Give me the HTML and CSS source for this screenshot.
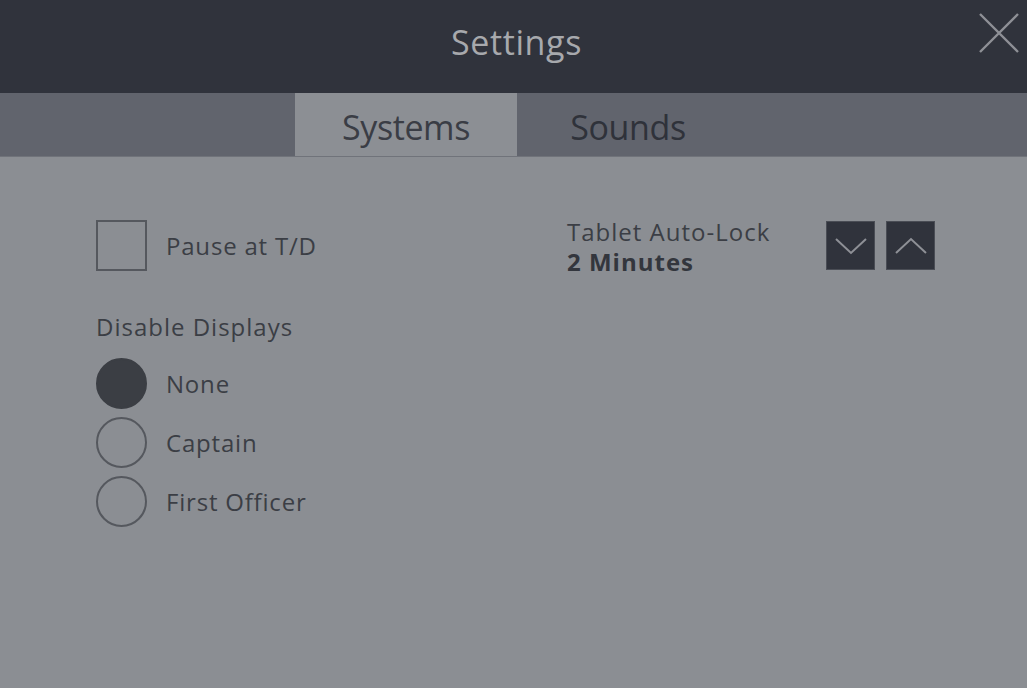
FILE: index.html
```html
<!DOCTYPE html>
<html>
<head>
<meta charset="utf-8">
<link rel="stylesheet" href="styles.css">
</head>
<body>
<div class="app">
  <header class="header">
    <div class="title">Settings</div>
    <button class="close" aria-label="Close">
      <svg width="42" height="42" viewBox="0 0 42 42"><path d="M2 2 L40 40 M40 2 L2 40" stroke="#8e9096" stroke-width="2.4" fill="none"/></svg>
    </button>
  </header>
  <nav class="tabs">
    <div class="tab active">Systems</div>
    <div class="tab">Sounds</div>
  </nav>
  <main class="content">
    <section class="col-left">
      <div class="check-row">
        <span class="checkbox"></span>
        <span class="label">Pause at T/D</span>
      </div>
      <div class="group-title">Disable Displays</div>
      <div class="radios">
        <div class="radio-row"><span class="radio checked"></span><span class="label">None</span></div>
        <div class="radio-row"><span class="radio"></span><span class="label">Captain</span></div>
        <div class="radio-row"><span class="radio"></span><span class="label">First Officer</span></div>
      </div>
    </section>
    <section class="col-right">
      <div class="lock-text">
        <div class="lock-title">Tablet Auto-Lock</div>
        <div class="lock-value">2 Minutes</div>
      </div>
      <div class="steppers">
        <button class="step"><svg width="34" height="20" viewBox="0 0 34 20"><path d="M2 3 L17 17 L32 3" stroke="#8e9096" stroke-width="2" fill="none"/></svg></button>
        <button class="step"><svg width="34" height="20" viewBox="0 0 34 20"><path d="M2 17 L17 3 L32 17" stroke="#8e9096" stroke-width="2" fill="none"/></svg></button>
      </div>
    </section>
  </main>
</div>
</body>
</html>
```

FILE: styles.css
```css
* { box-sizing: border-box; }
html, body { margin: 0; padding: 0; }
body {
  width: 1027px;
  height: 688px;
  overflow: hidden;
  background: #8b8e93;
  font-family: "Open Sans", "Liberation Sans", sans-serif;
  color: #3a3d44;
}
.app { display: flex; flex-direction: column; height: 688px; }
.header {
  height: 93px;
  background: #30333c;
  display: flex;
  align-items: center;
  justify-content: center;
  position: relative;
}
.title {
  font-size: 34px;
  color: #a7a9ad;
  letter-spacing: 0.6px;
  margin-top: -10px;
  margin-left: 6px;
}
.close {
  position: absolute;
  right: 7px;
  top: 12px;
  width: 42px;
  height: 42px;
  padding: 0;
  border: 0;
  background: none;
}
.close svg { display: block; }
.tabs {
  height: 64px;
  background: #61646d;
  display: flex;
  padding-left: 295px;
  border-bottom: 1px solid #70737a;
}
.tab {
  width: 222px;
  display: flex;
  align-items: center;
  justify-content: center;
  font-size: 34px;
  letter-spacing: -0.4px;
  color: #2f323a;
  padding-top: 4px;
}
.tab.active { background: #8c8f94; color: #3a3d45; }
.content {
  flex: 1;
  display: flex;
  padding: 63px 0 0 96px;
}
.col-left { width: 471px; }
.check-row { display: flex; align-items: center; height: 51px; }
.checkbox {
  width: 51px; height: 51px;
  border: 2px solid #55585e;
  flex: none;
}
.label { font-size: 24px; margin-left: 19px; color: #3b3e45; letter-spacing: 0.8px; }
.group-title { font-size: 24px; margin-top: 39px; line-height: 34px; color: #3b3e45; letter-spacing: 1px; }
.radios { margin-top: 14px; display: flex; flex-direction: column; gap: 8px; }
.radio-row { display: flex; align-items: center; height: 51px; }
.radio {
  width: 51px; height: 51px;
  border-radius: 50%;
  border: 2px solid #55585e;
  flex: none;
}
.radio.checked { background: #3b3e44; border-color: #3b3e44; }
.col-right { display: flex; align-items: flex-start; }
.lock-text { width: 259px; margin-top: -4px; }
.lock-title { font-size: 24px; line-height: 32px; color: #3b3e45; letter-spacing: 1px; }
.lock-value { font-size: 24px; line-height: 28px; font-weight: 700; color: #33363d; letter-spacing: 1px; }
.steppers { display: flex; gap: 11px; margin-top: 1px; }
.step {
  width: 49px; height: 49px;
  background: #30333c;
  border: 1px solid #4a4d55;
  padding: 0;
  display: flex; align-items: center; justify-content: center;
}
.step svg { display: block; }
```
